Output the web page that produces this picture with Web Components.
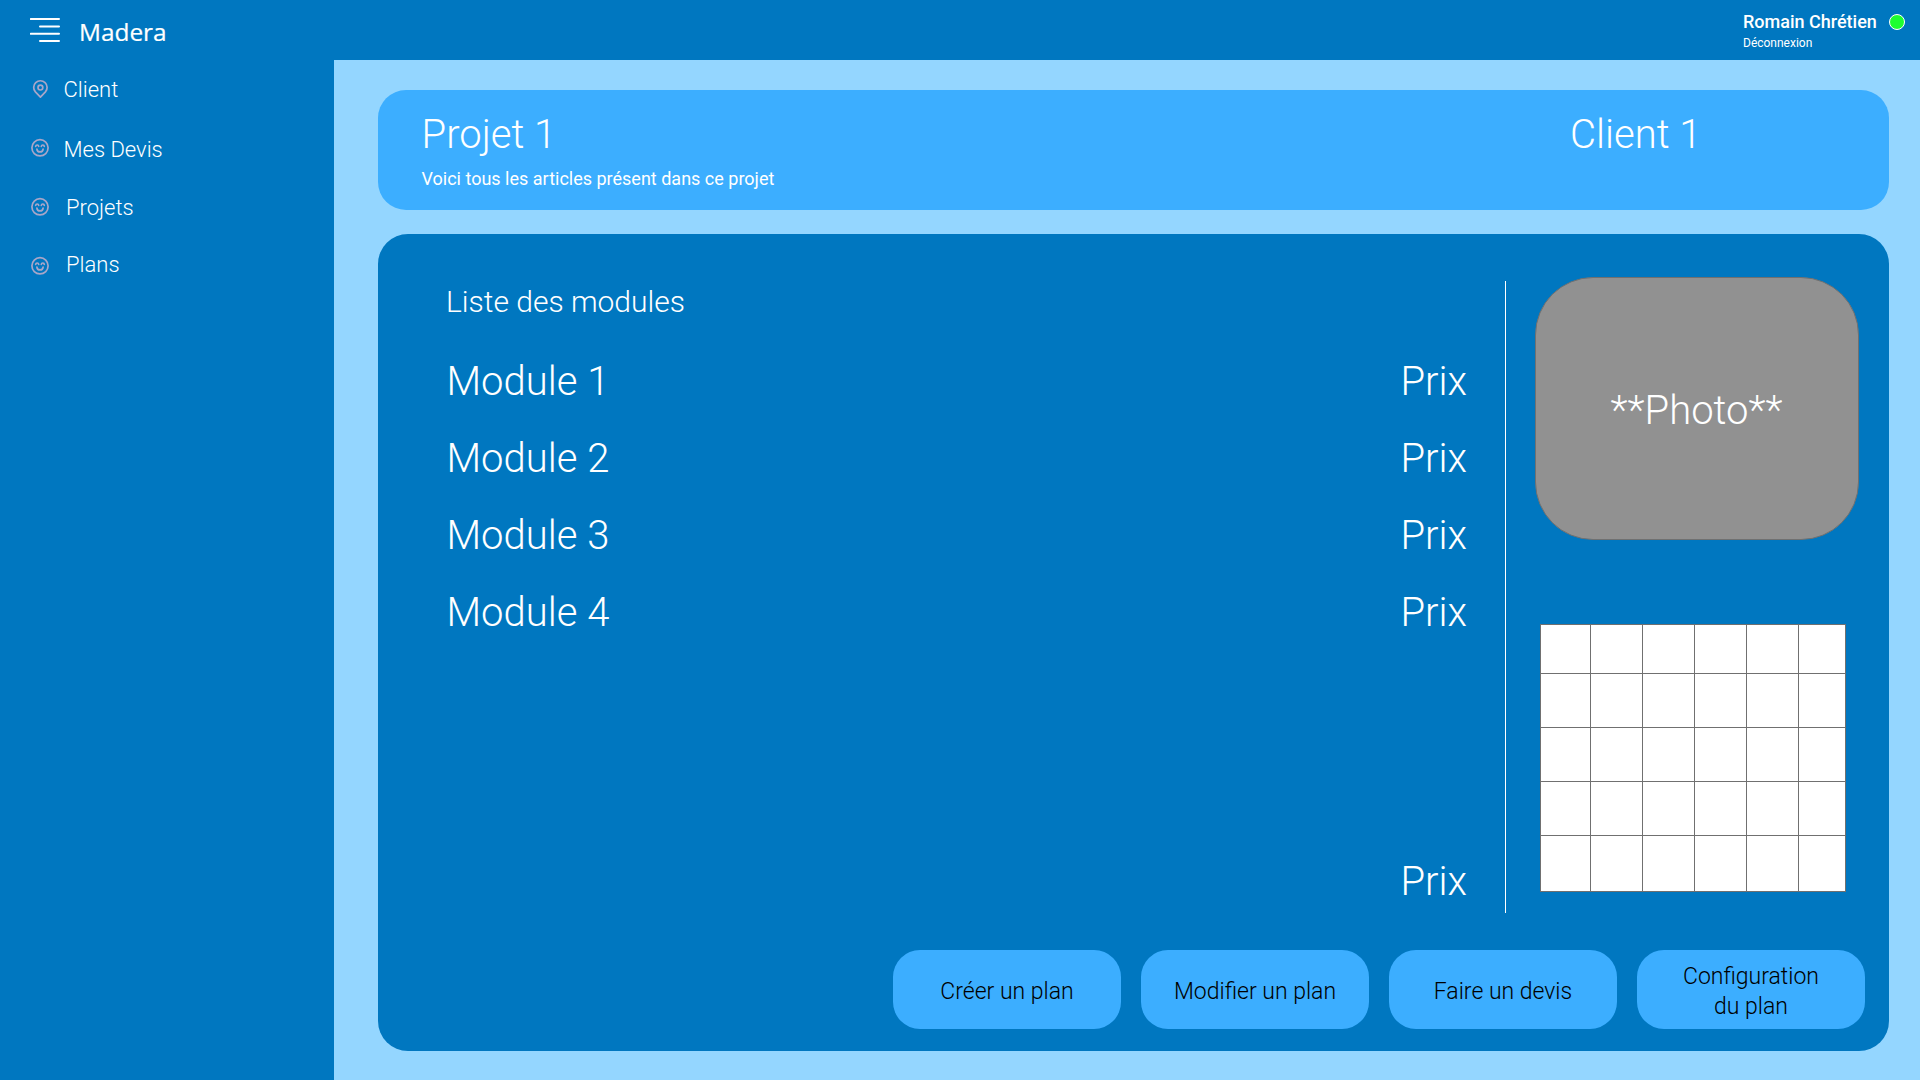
<!DOCTYPE html>
<html lang="fr">
<head>
<meta charset="utf-8">
<title>Madera</title>
<style>
body { margin: 0; background: #94d6ff; font-family: Roboto, "Liberation Sans", sans-serif; font-weight: 300; color: #fff; }
</style>
</head>
<body>
<madera-app></madera-app>
<script>
const define = (name, html) => customElements.define(name, class extends HTMLElement {
  connectedCallback() {
    if (this.shadowRoot) return;
    const t = document.createElement('template');
    t.innerHTML = html;
    this.attachShadow({ mode: 'open' }).append(t.content.cloneNode(true));
  }
});

define('menu-icon', `
<style>:host { display: block; width: 30px; height: 24px; } svg { display: block; }</style>
<svg width="30" height="24" viewBox="0 0 30 24" stroke="#fff" stroke-width="2" stroke-linecap="round">
  <path d="M.8 1H29M10 8.4H29M.8 15.8H29M10 23H29"/>
</svg>`);

define('pin-icon', `
<style>:host { display: block; width: 20px; height: 20px; } svg { display: block; }</style>
<svg width="20" height="20" viewBox="0 0 20 20" fill="none" stroke="#a9a6c8" stroke-width="1.7">
  <path d="M10.4 18.2L5.4 12.9A6.7 6.7 0 1 1 15.4 12.9Z" stroke-linejoin="round"/>
  <circle cx="10.4" cy="8.6" r="2.4"/>
</svg>`);

define('smile-icon', `
<style>:host { display: block; width: 20px; height: 20px; } svg { display: block; }</style>
<svg width="20" height="20" viewBox="0 0 20 20" fill="none" stroke="#a9a6c8" stroke-width="1.7" stroke-linecap="round">
  <circle cx="10" cy="9.8" r="8.1"/>
  <path d="M5.7 8.4C5.9 6.5 8.4 6.5 8.7 8.4M11.3 8.4C11.6 6.5 14.1 6.5 14.3 8.4"/>
  <path d="M6.9 11.1C7.2 14.9 12.8 14.9 13.1 11.1"/>
</svg>`);

define('user-status', `
<style>
:host { display: flex; align-items: flex-start; }
.who { width: 146px; }
.name { font-size: 18px; line-height: 22px; font-weight: 500; white-space: nowrap; }
.out { font-size: 12px; line-height: 14px; font-weight: 400; margin-top: 3px; }
.dot { width: 14px; height: 14px; border-radius: 50%; border: 1px solid #fff; background: #1dff2f; margin-top: 3px; }
</style>
<div class="who"><div class="name"><slot></slot></div><div class="out">Déconnexion</div></div>
<div class="dot"></div>`);

define('app-header', `
<style>
:host { display: flex; height: 60px; box-sizing: border-box; padding: 0 15px 0 30px; background: #0077c0; }
menu-icon { margin-top: 18px; }
.brand { margin: 16px auto 0 19px; font: 400 24.4px/32px "Open Sans", "Noto Sans", sans-serif; -webkit-text-stroke: .2px #fff; }
user-status { margin-top: 11px; }
</style>
<menu-icon></menu-icon><div class="brand">Madera</div><user-status>Romain Chrétien</user-status>`);

define('nav-item', `
<style>
:host { display: flex; align-items: flex-start; height: 59px; padding-left: 30px; font-size: 22px; line-height: 28px; }
.label { margin: var(--dy, 0) 0 0 var(--dx, 13.5px); }
</style>
<slot name="icon"></slot><span class="label"><slot></slot></span>`);

define('side-nav', `
<style>:host { display: block; box-sizing: border-box; width: 334px; padding-top: 19px; background: #0077c0; }</style>
<nav-item style="--dy:-3px"><pin-icon slot="icon"></pin-icon>Client</nav-item>
<nav-item style="--dy:-2px"><smile-icon slot="icon"></smile-icon>Mes Devis</nav-item>
<nav-item style="--dx:16px;--dy:-3px"><smile-icon slot="icon"></smile-icon>Projets</nav-item>
<nav-item style="--dx:16px;--dy:-5px"><smile-icon slot="icon"></smile-icon>Plans</nav-item>`);

define('project-banner', `
<style>
:host { display: flex; justify-content: space-between; box-sizing: border-box; height: 120px; padding: 21px 187.5px 0 44px; border-radius: 28px; background: #3caeff; }
.t { font-size: 40px; line-height: 48px; }
.s { font-size: 18px; line-height: 24px; font-weight: 400; margin-top: 8px; }
</style>
<div><div class="t">Projet 1</div><div class="s">Voici tous les articles présent dans ce projet</div></div>
<div class="t">Client 1</div>`);

define('module-row', `
<style>:host { display: flex; justify-content: space-between; height: 77px; font-size: 40px; line-height: 48px; }</style>
<span><slot></slot></span><span>Prix</span>`);

define('module-list', `
<style>
:host { display: flex; flex-direction: column; box-sizing: border-box; width: 1128px; height: 632px; padding-left: 68.5px; padding-right: 38px; border-right: 1px solid #fff; }
.h { font-size: 30px; line-height: 36px; margin: 3px 0 38px -.5px; }
.total { margin-top: auto; height: 55px; }
</style>
<div class="h">Liste des modules</div>
<module-row>Module 1</module-row><module-row>Module 2</module-row>
<module-row>Module 3</module-row><module-row>Module 4</module-row>
<module-row class="total"></module-row>`);

define('photo-box', `
<style>:host { display: flex; box-sizing: border-box; justify-content: center; width: 324px; height: 262.5px; padding-top: 109px; border: 1px solid #707070; border-radius: 58px; background: #919191; font-size: 40px; line-height: 48px; }</style>
<slot></slot>`);

customElements.define('plan-grid', class extends HTMLElement {
  connectedCallback() {
    this.attachShadow({ mode: 'open' }).innerHTML = `
<style>
:host { display: grid; box-sizing: border-box; width: 306px; height: 268px; gap: 1px; padding: 1px; background: #707070;
  grid-template-columns: 49px repeat(4, 51px) 46px; grid-template-rows: 48px repeat(3, 53px) 55px; }
i { background: #fff; }
</style>` + '<i></i>'.repeat(30);
  }
});

define('action-button', `
<style>:host { display: flex; align-items: center; justify-content: center; box-sizing: border-box; width: 228px; height: 79px; padding-top: 5px; border-radius: 27px; background: #3caeff; color: #000; font-size: 23px; line-height: 30px; text-align: center; }</style>
<span><slot></slot></span>`);

define('project-panel', `
<style>
:host { display: flex; flex-direction: column; box-sizing: border-box; height: 817.4px; padding-top: 43px; border-radius: 30px; background: #0077c0; }
.body { display: flex; height: 673px; }
module-list { margin-top: 4px; }
.side { display: flex; flex-direction: column; padding-left: 28.5px; }
plan-grid { margin: 84.5px 0 0 5.5px; }
.actions { display: flex; justify-content: flex-end; gap: 20px; padding-right: 24px; }
</style>
<div class="body">
  <module-list></module-list>
  <div class="side"><photo-box>**Photo**</photo-box><plan-grid></plan-grid></div>
</div>
<div class="actions">
  <action-button>Créer un plan</action-button>
  <action-button>Modifier un plan</action-button>
  <action-button>Faire un devis</action-button>
  <action-button>Configuration<br>du plan</action-button>
</div>`);

define('madera-app', `
<style>
:host { display: flex; flex-direction: column; height: 1080px; }
.main { display: flex; flex: 1; }
.content { flex: 1; display: flex; flex-direction: column; gap: 24px; padding: 30px 31px 0 44px; }
project-banner { margin-left: -.5px; }
</style>
<app-header></app-header>
<div class="main"><side-nav></side-nav><div class="content"><project-banner></project-banner><project-panel></project-panel></div></div>`);
</script>
</body>
</html>
